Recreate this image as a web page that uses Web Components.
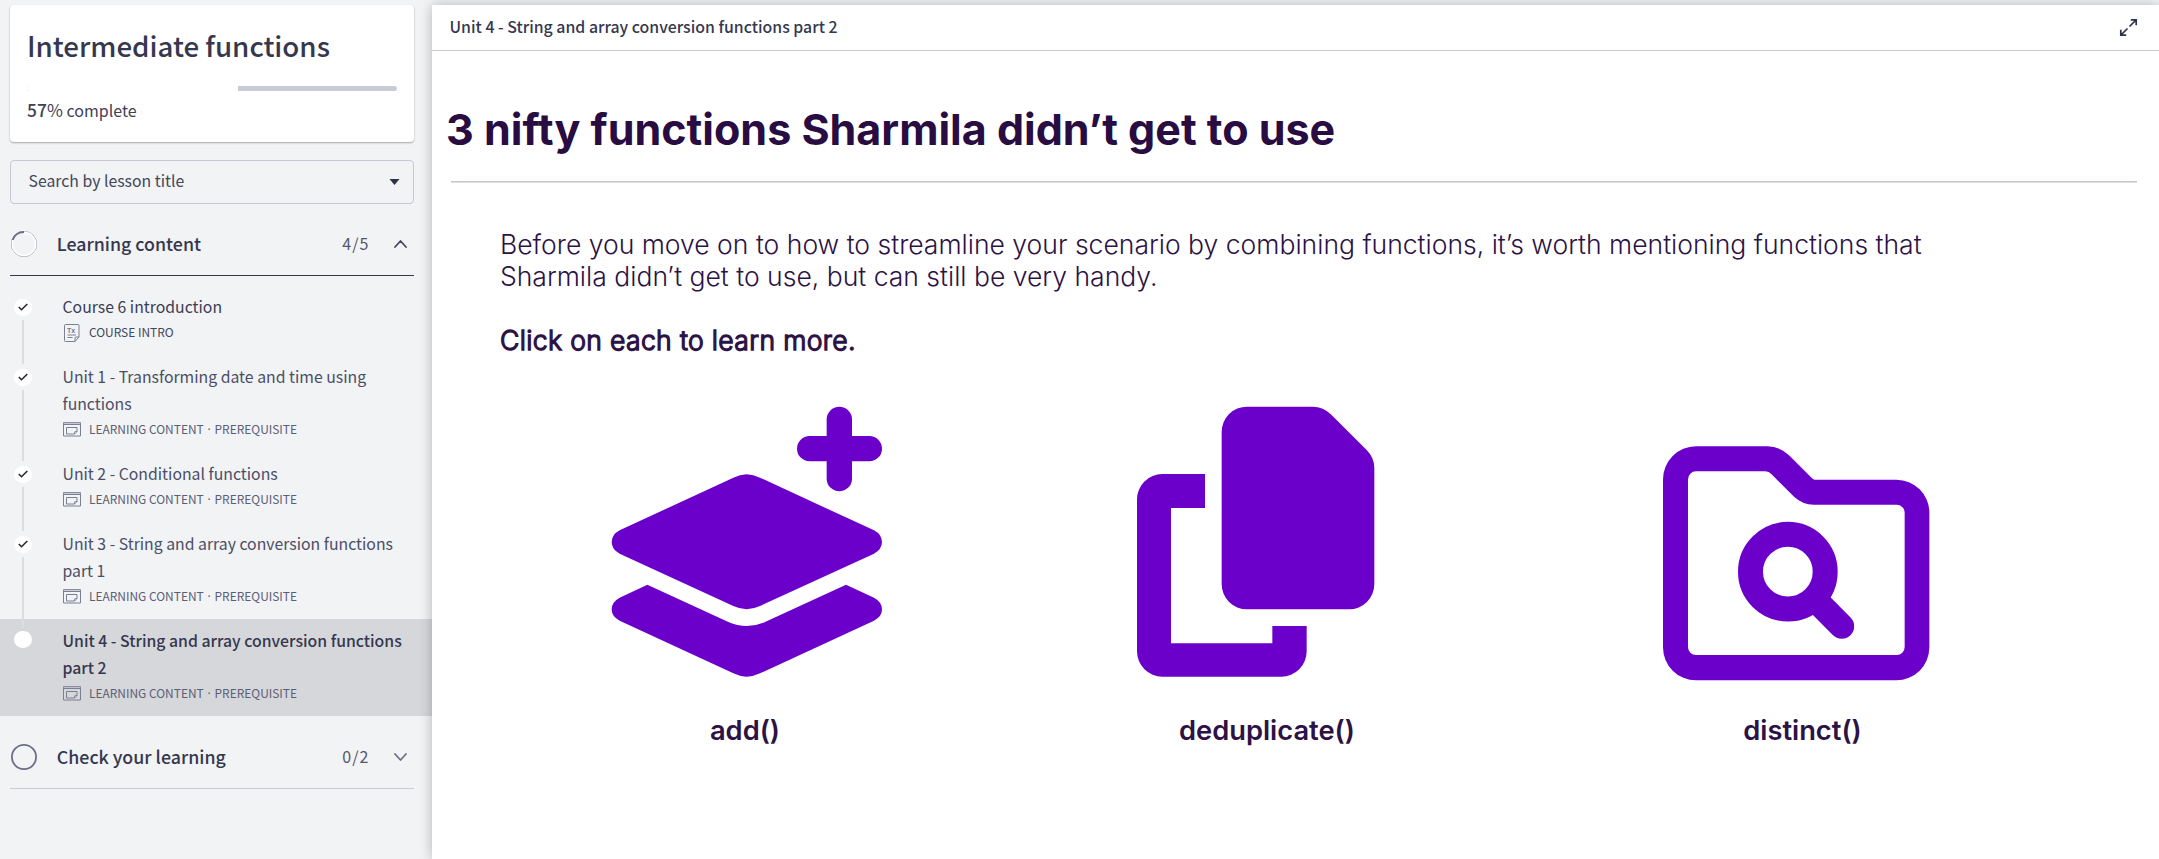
<!DOCTYPE html>
<html lang="en"><head><meta charset="utf-8"><title>Intermediate functions</title>
<style>
html,body{margin:0;height:100%;overflow:hidden;background:#f1f3f5}
body{font-family:"Noto Sans CJK SC","Noto Sans",sans-serif;color:#35374f}
</style></head><body>
<course-app>
  <course-sidebar slot="side">
    <progress-card percent="57">Intermediate functions</progress-card>
    <lesson-search>Search by lesson title</lesson-search>
    <section-head state="open" count="4/5">Learning content</section-head>
    <lesson-item kind="doc" type="COURSE INTRO" done style="--fg:#3b3d53">Course 6 introduction</lesson-item>
    <lesson-item type="LEARNING CONTENT" extra="PREREQUISITE" done>Unit 1 - Transforming date and time using<br>functions</lesson-item>
    <lesson-item type="LEARNING CONTENT" extra="PREREQUISITE" done>Unit 2 - Conditional functions</lesson-item>
    <lesson-item type="LEARNING CONTENT" extra="PREREQUISITE" done>Unit 3 - String and array conversion functions<br>part 1</lesson-item>
    <lesson-item type="LEARNING CONTENT" extra="PREREQUISITE" current>Unit 4 - String and array conversion functions<br>part 2</lesson-item>
    <section-head state="closed" count="0/2">Check your learning</section-head>
  </course-sidebar>
  <lesson-view heading="Unit 4 - String and array conversion functions part 2">
    <lesson-title>3 nifty functions Sharmila didn’t get to use</lesson-title>
    <lesson-copy>Before you move on to how to streamline your scenario by combining functions, it’s worth mentioning functions that<br>Sharmila didn’t get to use, but can still be very handy.<b slot="cta">Click on each to learn more.</b></lesson-copy>
    <function-list>
      <function-card icon="add" style="--shift:-5px">add()</function-card>
      <function-card icon="dedupe" style="--shift:-3px">deduplicate()</function-card>
      <function-card icon="distinct" style="--shift:2.5px">distinct()</function-card>
    </function-list>
  </lesson-view>
</course-app>
<script>
const define=(name,render)=>customElements.define(name,class extends HTMLElement{
  connectedCallback(){
    if(this.shadowRoot)return;
    const t=document.createElement('template');
    t.innerHTML=render(this);
    this.attachShadow({mode:'open'}).append(t.content.cloneNode(true));
  }
});
define('course-app',()=>`<style>
:host{display:flex;height:859px;background:#f1f3f5}
::slotted(course-sidebar){flex:none}
::slotted(lesson-view){flex:1}
</style><slot name="side"></slot><slot></slot>`);
define('course-sidebar',()=>`<style>
:host{display:block;width:432px;padding-top:5px;box-sizing:border-box}
</style><slot></slot>`);
define('progress-card',el=>`<style>
:host{display:block;box-sizing:border-box;height:137px;margin:0 18px 0 10px;padding:23px 17px 0;background:#fff;border-radius:4px;box-shadow:0 1px 2px rgba(0,0,0,.32)}
h1{margin:0;font-weight:500;font-size:27.7px;line-height:34px;white-space:nowrap}
.bar{height:5px;margin:24px 0 7px;border-radius:3px;background:#c9cbd7;overflow:hidden}
.bar i{display:block;height:5px;width:${el.getAttribute('percent')}%;background:#fff}
p{margin:0;font-size:16px;line-height:24px;color:#3f4157}
b{font-weight:500;font-size:17.4px;letter-spacing:.1px}
</style><h1><slot></slot></h1><div class="bar"><i></i></div><p><b>${el.getAttribute('percent')}</b><span style="font-size:17.3px">%</span> complete</p>`);
define('lesson-search',()=>`<style>
:host{display:flex;align-items:center;justify-content:space-between;box-sizing:border-box;height:44px;margin:18px 18px 0 10px;padding:0 13px 3px 17.5px;border:1px solid #c6c8d5;border-radius:4px;font-size:15.8px;color:#44465b}
svg{display:block;margin-top:2px}
</style><span><slot></slot></span><svg width="11" height="6" viewBox="0 0 11 6"><path d="M.5 0h10L5.5 6z" fill="#2f3149"/></svg>`);
define('section-head',el=>{const open=el.getAttribute('state')==='open';return `<style>
:host{display:flex;align-items:center;box-sizing:border-box;height:${open?72:73}px;margin:0 18px 0 10px;border-bottom:1px solid ${open?'#35374f':'#c9cbd8'};padding:${open?'9px':'10px'} 0 0 1px;margin-bottom:${open?9:0}px}
svg{display:block;flex:none}
.t{flex:1;margin-left:19.8px;padding-bottom:2px;font-weight:500;font-size:17.8px;line-height:26px}
.c{font-size:16px;letter-spacing:1.1px;color:#55576d;padding-bottom:2px;margin-right:24.5px}
.v{margin-right:7px}
</style><svg width="26" height="26" viewBox="0 0 26 26" fill="none">${open?
'<circle cx="13" cy="13" r="12.6" stroke="#85879b" stroke-width=".8"/><circle cx="13" cy="13" r="11.6" stroke="#fff" stroke-width="1.7"/><path d="M1.6 9A12 12 0 0 1 13 1" stroke="#6c6e86" stroke-width="2"/>':
'<circle cx="13" cy="13" r="12.1" stroke="#6c6e86" stroke-width="1.8"/>'}</svg>
<span class="t"><slot></slot></span><span class="c">${el.getAttribute('count')}</span>
<svg class="v" width="13" height="8" viewBox="0 0 13 8" fill="none" stroke="${open?'#44465d':'#6c6e86'}" stroke-width="1.8" stroke-linecap="round" stroke-linejoin="round"><path d="${open?'M1 7l5.5-6L12 7':'M1 1l5.5 6L12 1'}"/></svg>`});
const DOC='<svg width="18" height="19" viewBox="0 0 18 19" fill="none" stroke="#7c7e92" stroke-width="1"><path d="M2.5 1.5h12.5a1 1 0 0 1 1 1V14l-4 4.5H2.5a1 1 0 0 1-1-1v-15a1 1 0 0 1 1-1zM16 14h-3a1 1 0 0 0-1 1v3.5M4.5 12h8.5M4.5 14.5h5"/><text x="4" y="9.5" font-family="Liberation Sans,sans-serif" font-size="7" font-weight="700" fill="#74768b" stroke="none">Tx</text></svg>';
const WIN='<svg width="18" height="19" viewBox="0 0 18 19" fill="none" stroke="#7c7e92" stroke-width="1"><path d="M.5 2.5h17v13.5H.5zM.5 4.5h17"/><path d="M.5 3.2h17" stroke="#b4b6c4"/><path d="M3.5 7.500h10.500v4l-2.500 2.500h-8zM14 11.500h-1.500a1 1 0 0 0-1 1v1.500"/></svg>';
define('lesson-item',el=>{const cur=el.hasAttribute('current');return `<style>
:host{display:flex;background:${cur?'#d6d7db':'none'};color:var(--fg,#4c4e66)}
.rail{width:62px;flex:none;display:flex;flex-direction:column;align-items:flex-start}
.dot{width:17.5px;height:17.5px;margin:${cur?'11.5px':'13.5px'} 0 0 14px;flex:none;border-radius:50%;background:#fff;display:flex;align-items:center;justify-content:center}
.line{flex:1;width:2px;margin:3.5px 0 -9px 22px;background:#dcdde2;position:relative}
.txt{padding:8px 0 12px .5px}
.t{font-size:15.8px;line-height:27px;white-space:nowrap;${cur?'font-weight:500;color:#35374f':''}}
.m{display:flex;align-items:center;height:20px;margin:2px 0 1px;font-size:11.95px;white-space:nowrap;color:${el.getAttribute('kind')?'#44465b':'#5c5e75'}}
.m svg{margin:0 8px 0 .5px;flex:none}
.m span{line-height:20px}.d{width:10.8px;text-align:center;font-family:"Noto Sans",sans-serif;padding-top:2px}
</style><div class="rail"><div class="dot">${cur?'':'<svg width="10" height="8" viewBox="0 0 10 8" fill="none" stroke="#26262e" stroke-width="1.6"><path d="M.8 4l2.7 2.7L9.3 1"/></svg>'}</div>${cur?'':'<div class="line"></div>'}</div>
<div class="txt"><div class="t"><slot></slot></div><div class="m">${el.getAttribute('kind')?DOC:WIN}<span>${el.getAttribute('type')}</span>${el.getAttribute('extra')?`<span class="d">·</span><span>${el.getAttribute('extra')}</span>`:''}</div></div>`});
define('lesson-view',el=>`<style>
:host{display:block;position:relative;margin-top:5px;background:#fff;box-shadow:0 0 12px rgba(0,0,0,.26)}
header{display:flex;justify-content:space-between;align-items:center;height:45px;border-bottom:1px solid #c8cad6;padding:0 21px 0 17.5px}
span{font-size:15.85px;font-weight:500;line-height:24px;padding-bottom:2px}
</style><header><span>${el.getAttribute('heading')}</span>
<svg width="19" height="19" viewBox="0 0 19 19" fill="none" stroke="#2f3149" stroke-width="1.7"><path d="M11.8 1.8H17.2V7.2M17 2l-6.5 6.5M7.2 17.2H1.8V11.8M2 17l6.5-6.5"/></svg></header><slot></slot>`);
define('lesson-title',()=>`<style>
:host{display:block;margin:52px 22px 0 19px;padding-bottom:26px;border-bottom:1px solid #c9c5c6;box-shadow:0 1px 0 #e2dedf}
h2{margin:0 0 0 -5px;font:700 43.02px/52px Inter,sans-serif;color:#280c42;white-space:nowrap}
</style><h2><slot></slot></h2>`);
define('lesson-copy',()=>`<style>
:host{display:block;margin:46px 0 0 68px;font:300 26.52px/32px Inter,sans-serif;color:#2c1245;white-space:nowrap}
::slotted(b){display:block;margin-top:32px;font-weight:300;letter-spacing:.36px;-webkit-text-stroke:1.3px #2c1245}
</style><slot></slot><slot name="cta"></slot>`);
define('function-list',()=>`<style>
:host{display:grid;grid-template-columns:320px 320px 320px;column-gap:200px;margin:34px 0 0 158px}
::slotted(:last-child){margin-left:10px;margin-right:-10px}
</style><slot></slot>`);
const ART={
add:'<rect x="710" y="50" width="76" height="254" rx="38"/><rect x="621" y="138" width="255" height="76" rx="38"/><path d="M430 263Q470 242 510 263L852 421Q876 434 876 456Q876 478 852 491L510 648Q470 667 430 648L89 491Q65 478 65 456Q65 434 89 421Z"/><path d="M172 584L415 696Q470 720 525 696L768 584L852 623Q876 636 876 658Q876 680 852 692L510 850Q470 870 430 850L89 692Q65 680 65 658Q65 636 89 623Z"/>',
dedupe:'<path d="M411 50H608Q640 50 664 74L770 180Q793 203 793 234V582A76 76 0 0 1 717 658H411A76 76 0 0 1 335 582V126A76 76 0 0 1 411 50Z"/><path d="M157 252H285V354H183V760H487V708H590V784A76 76 0 0 1 514 860H157A76 76 0 0 1 81 784V328A76 76 0 0 1 157 252Z"/>',
distinct:'<g transform="translate(0 90)"><path fill-rule="evenodd" d="M168 79H382Q420 79 447 106L516 175Q520 179 524 179H769A99 99 0 0 1 868 278V682A99 99 0 0 1 769 781H168A99 99 0 0 1 69 682V178A99 99 0 0 1 168 79ZM168 154A24 24 0 0 0 144 178V681A24 24 0 0 0 168 705H770A24 24 0 0 0 794 681V279A24 24 0 0 0 770 254H521Q488 254 463 231L394 162Q387 154 376 154Z"/><circle cx="443.5" cy="455" r="112" fill="none" stroke="#6c00cb" stroke-width="75"/><path d="M535 548L605 619" stroke="#6c00cb" stroke-width="75" stroke-linecap="round"/></g>'};
define('function-card',el=>`<style>
:host{display:block;width:320px}
svg{display:block}
p{margin:24px 0 0 var(--shift,0);width:320px;text-align:center;font:600 27.3px/33px Inter,sans-serif;color:#2c1245}
</style><svg width="320" height="300" viewBox="0 0 960 900" fill="#6c00cb">${ART[el.getAttribute('icon')]}</svg><p><slot></slot></p>`);
</script></body></html>
